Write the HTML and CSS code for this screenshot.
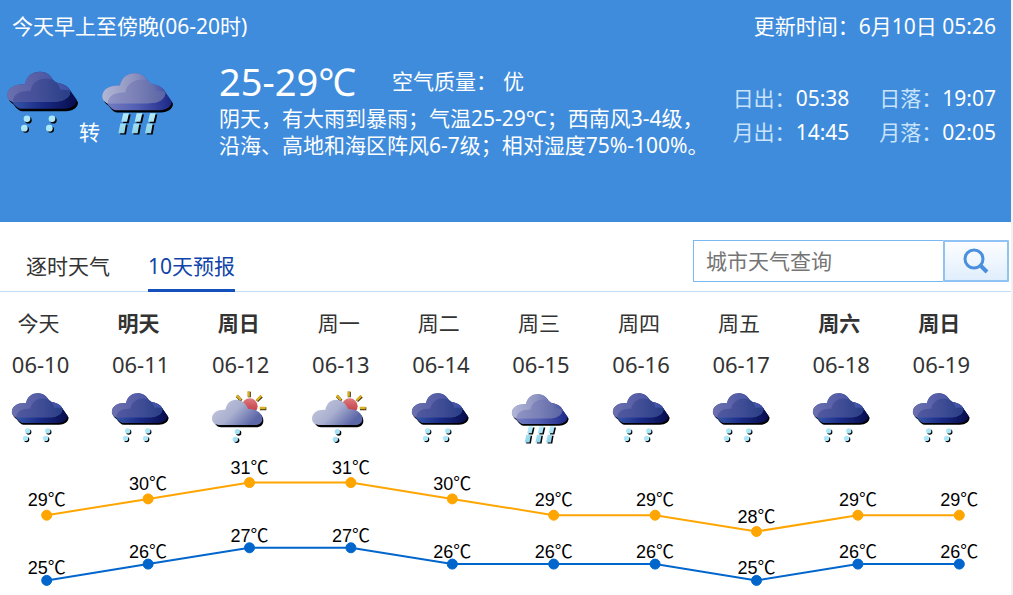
FILE: index.html
```html
<!DOCTYPE html>
<html lang="zh-CN">
<head>
  <meta charset="UTF-8" />
  <meta name="viewport" content="width=device-width, initial-scale=1.0"/>
  <title>天气预报</title>
  <link rel="stylesheet" href="styles.css">
</head>
<body>

<!-- weather icons -->
<svg class="icon-defs" width="0" height="0" aria-hidden="true">
  <defs>
    <linearGradient id="rainBase" x1="0" x2="1"><stop offset="0" stop-color="#3a5cab"/><stop offset=".5" stop-color="#1a2b86"/><stop offset="1" stop-color="#070c4c"/></linearGradient>
    <linearGradient id="rainBack" x1="0" x2="1"><stop offset="0" stop-color="#6c70ae"/><stop offset=".5" stop-color="#555da6"/><stop offset="1" stop-color="#3d51a8"/></linearGradient>
    <linearGradient id="rainFront" x1="0" x2="1"><stop offset="0" stop-color="#5259a0"/><stop offset=".5" stop-color="#414e96"/><stop offset="1" stop-color="#283e86"/></linearGradient>
    <linearGradient id="heavyBase" x1="0" x2="1"><stop offset="0" stop-color="#7880c2"/><stop offset=".5" stop-color="#525eb2"/><stop offset="1" stop-color="#1c2888"/></linearGradient>
    <linearGradient id="heavyBack" x1="0" x2="1"><stop offset="0" stop-color="#b2b6d6"/><stop offset=".5" stop-color="#8e94c0"/><stop offset="1" stop-color="#4854a6"/></linearGradient>
    <linearGradient id="heavyFront" x1="0" x2="1"><stop offset="0" stop-color="#9094c6"/><stop offset=".5" stop-color="#7a80b6"/><stop offset="1" stop-color="#5a64a4"/></linearGradient>
    <linearGradient id="showerCloud" x1="0" y1="0" x2="1" y2=".5"><stop offset="0" stop-color="#c9cce0"/><stop offset=".55" stop-color="#a9afcf"/><stop offset="1" stop-color="#5c67a8"/></linearGradient>
    <linearGradient id="sunFill" x1="0" y1="0" x2="0" y2="1"><stop offset="0" stop-color="#dd7a7c"/><stop offset="1" stop-color="#c0303c"/></linearGradient>
    <linearGradient id="streak" x1="0" y1="0" x2="0" y2="1"><stop offset="0" stop-color="#b6ecfb"/><stop offset="1" stop-color="#8fd3ea"/></linearGradient>

    <path id="cloudBody" d="M22 106C22 85 42 72 75 73C80 48 98 36 120 36C142 36 155 50 163 68C188 70 206 80 211 93L230 120C230 136 214 147 194 147H62Q50 146 36 126Q22 118 22 106Z"/>
    <path id="cloudBack" d="M22 106C22 85 42 72 75 73C80 48 98 36 120 36C142 36 155 50 163 68C188 70 206 80 211 93C212 112 194 126 160 126H36Q22 118 22 106Z"/>
    <path id="cloudFront" d="M38 126C40 104 60 92 91 94C96 68 116 56 138 56C162 56 177 70 181 90Q198 88 211 93C212 112 194 126 160 126Z"/>
    <path id="streakPair" d="M85 156h17l-6 26h-17zM76 187h17l-5 29h-18z"/>

    <symbol id="rain" viewBox="15 25 228 200">
      <use href="#cloudBody" x="4" y="7"/>
      <use href="#cloudBody" fill="url(#rainBase)"/>
      <use href="#cloudBack" fill="url(#rainBack)"/>
      <use href="#cloudFront" fill="url(#rainFront)"/>
      <g><circle cx="85" cy="181" r="10"/><circle cx="77" cy="209" r="10"/><circle cx="160" cy="181" r="10"/><circle cx="152" cy="209" r="10"/></g>
      <g fill="#aee7f8"><circle cx="81" cy="177" r="10"/><circle cx="73" cy="205" r="10"/><circle cx="156" cy="177" r="10"/><circle cx="148" cy="205" r="10"/></g>
    </symbol>

    <symbol id="heavy" viewBox="15 25 228 200">
      <use href="#streakPair" x="5" y="8"/><use href="#streakPair" x="45" y="8"/><use href="#streakPair" x="85" y="8"/>
      <g fill="url(#streak)"><use href="#streakPair" y="4"/><use href="#streakPair" x="40" y="4"/><use href="#streakPair" x="80" y="4"/></g>
      <use href="#cloudBody" x="4" y="11"/>
      <use href="#cloudBody" y="4" fill="url(#heavyBase)"/>
      <use href="#cloudBack" y="4" fill="url(#heavyBack)"/>
      <use href="#cloudFront" y="4" fill="url(#heavyFront)"/>
    </symbol>

    <symbol id="shower" viewBox="32 30 183 160">
      <g fill="none" stroke="#3c3010" stroke-width="9"><path d="M150 34v17M113 47l13 14M173 62l14-14M182 85h19"/></g>
      <g fill="none" stroke="#d8b020" stroke-width="7"><path d="M148 33v16M112 45l13 14M172 60l14-14M181 83h18"/></g>
      <circle cx="151" cy="78" r="24" fill="url(#sunFill)"/>
      <path d="M42 122C51 138 56 141 70 141H170C184 141 192 133 192 122C192 104 178 94 158 94H100L50 110Z"/>
      <path fill="url(#showerCloud)" d="M38 115C38 97 54 87 78 88C82 68 94 58 110 58C128 58 140 70 147 86C172 86 189 98 189 116C189 127 181 134 168 134H58Q38 131 38 115Z"/>
      <g><circle cx="118" cy="158" r="8"/><circle cx="112" cy="180" r="8"/></g>
      <g fill="#a5e2f5"><circle cx="114" cy="154" r="8"/><circle cx="108" cy="177" r="8"/></g>
    </symbol>
  </defs>
</svg>

<div class="page">
  <header class="today">
    <div class="today-top">
      <span>今天早上至傍晚(06-20时)</span>
      <span>更新时间：6月10日 05:26</span>
    </div>
    <div class="today-main">
      <div class="condition">
        <svg class="icon-lg" role="img" aria-label="大雨"><use href="#rain"/></svg>
        <span>转</span>
        <svg class="icon-lg" role="img" aria-label="暴雨"><use href="#heavy"/></svg>
      </div>
      <div class="info">
        <div class="info-head">
          <h1>25-29℃</h1>
          <span>空气质量：</span>
          <span class="aqi">优</span>
        </div>
        <p>阴天，有大雨到暴雨；气温25-29℃；西南风3-4级，<br>沿海、高地和海区阵风6-7级；相对湿度75%-100%。</p>
      </div>
      <div class="astro">
        <div><span>日出：</span>05:38</div>
        <div><span>日落：</span>19:07</div>
        <div><span>月出：</span>14:45</div>
        <div><span>月落：</span>02:05</div>
      </div>
    </div>
  </header>

  <nav class="tabs">
    <a href="#hourly">逐时天气</a>
    <a href="#forecast" class="active">10天预报</a>
    <form class="search">
      <input type="text" placeholder="城市天气查询" aria-label="城市天气查询">
      <button type="button" aria-label="查询">
        <svg width="28" height="28" viewBox="0 0 28 28" fill="none" stroke="#4a90dc" stroke-width="3"><circle cx="12" cy="12" r="9"/><path d="M18 18l7 7" stroke-width="4"/></svg>
      </button>
    </form>
  </nav>

  <table class="forecast" id="forecast">
    <thead>
      <tr>
        <th>今天</th><th class="rest">明天</th><th class="rest">周日</th><th>周一</th><th>周二</th>
        <th>周三</th><th>周四</th><th>周五</th><th class="rest">周六</th><th class="rest">周日</th>
      </tr>
    </thead>
    <tbody>
      <tr class="dates">
        <td>06-10</td><td>06-11</td><td>06-12</td><td>06-13</td><td>06-14</td>
        <td>06-15</td><td>06-16</td><td>06-17</td><td>06-18</td><td>06-19</td>
      </tr>
      <tr class="icons">
        <td><svg class="icon"><use href="#rain"/></svg></td>
        <td><svg class="icon"><use href="#rain"/></svg></td>
        <td><svg class="icon"><use href="#shower"/></svg></td>
        <td><svg class="icon"><use href="#shower"/></svg></td>
        <td><svg class="icon"><use href="#rain"/></svg></td>
        <td><svg class="icon"><use href="#heavy"/></svg></td>
        <td><svg class="icon"><use href="#rain"/></svg></td>
        <td><svg class="icon"><use href="#rain"/></svg></td>
        <td><svg class="icon"><use href="#rain"/></svg></td>
        <td><svg class="icon"><use href="#rain"/></svg></td>
      </tr>
    </tbody>
  </table>

  <svg class="chart" id="chart" viewBox="0 0 1011 151"></svg>
</div>

<script src="script.js"></script>
</body>
</html>
```
FILE: styles.css
```css
* { margin: 0; padding: 0; box-sizing: border-box; }
body {
  font-family: 'Noto Sans', 'Noto Sans CJK SC', sans-serif;
  font-size: 21px; line-height: 30px; color: #333; background: #f2f2f2;
}
a { color: inherit; text-decoration: none; }
.icon-defs { position: absolute; }
.page { margin-right: 2px; min-height: 100vh; background: #fff; }

.today { min-height: 222px; background: #3f8cdc; color: #fff; }
.today-top {
  display: flex; justify-content: space-between;
  padding: 11px 15px 0 12px;
}
.today-main { display: flex; padding: 0 15px 0 5px; white-space: nowrap; }
.condition { display: flex; align-items: flex-start; width: 214px; padding-top: 27px; }
.condition span { margin-left: -2px; padding-top: 49px; }
.icon-lg { width: 76px; height: 67px; }
.info { padding-top: 16px; }
.info-head { display: flex; align-items: center; height: 48px; line-height: 48px; }
.info-head h1 { font-size: 38px; font-weight: 400; margin-right: 36px; }
.info-head .aqi { margin-left: 6px; }
.info p { line-height: 27px; }
.astro {
  display: grid; grid-template-columns: auto auto;
  gap: 0 30px; align-content: start;
  margin-left: auto; padding-top: 40px; line-height: 34px;
}
.astro span { color: #c9e3fb; }

.tabs {
  display: flex; align-items: flex-end; gap: 38px;
  height: 70px; padding: 0 2px 0 26px;
  border-bottom: 1px solid #c4dcf4;
}
.tabs a { height: 43px; line-height: 34px; margin-bottom: -1px; }
.tabs a.active { color: #1144a8; border-bottom: 3px solid #1450bc; }
.search { display: flex; height: 42px; margin: 0 0 9px auto; }
.search input {
  width: 250px; padding: 0 12px; font: inherit; color: #333;
  border: 1px solid #7ab8f0; border-right: none; border-radius: 0; outline: none;
}
.search input::placeholder { color: #757575; }
.search button {
  display: flex; align-items: center; justify-content: center;
  width: 66px; cursor: pointer;
  border: 2px solid #90c3f3; border-radius: 1px;
  background: linear-gradient(#fdfeff, #e0eefc);
}

.forecast {
  width: 99%; margin-top: 16px;
  table-layout: fixed; border-collapse: collapse; text-align: center;
}
.forecast th, .forecast td { padding: 0 19px 0 0; white-space: nowrap; }
.forecast th { padding-right: 23px; font-weight: 400; }
.forecast th.rest { font-weight: 700; }
.dates td { padding-top: 11px; font-size: 22px; }
.icons td { padding-top: 11px; }
.icon { display: block; width: 61px; height: 54px; margin: 0 auto; }

.chart { display: block; width: 100%; }
.chart polyline { fill: none; stroke-width: 2; }
.chart .high { stroke: #ffa500; }
.chart .low { stroke: #0066cc; }
.chart circle.high { fill: #ffa500; }
.chart circle.low { fill: #0066cc; }
.chart circle { stroke: none; }
.chart text {
  font-family: 'Liberation Sans', 'Noto Sans CJK SC', sans-serif;
  font-size: 18px; fill: #000; text-anchor: middle;
}
```
FILE: script.js
```js
const chart = document.getElementById('chart');
const highs = [29, 30, 31, 31, 30, 29, 29, 28, 29, 29];
const lows = [25, 26, 27, 27, 26, 26, 26, 25, 26, 26];

function drawLine(temps, cls, labelGap) {
  const points = temps.map((t, i) => ({
    t: t,
    x: 46.7 + i * 101.4,
    y: 136.4 - (t - 25) * 16.3
  }));
  let html = `<polyline class="${cls}" points="${points.map(p => p.x + ',' + p.y).join(' ')}"/>`;
  points.forEach(p => {
    html += `<circle class="${cls}" cx="${p.x}" cy="${p.y}" r="5"/>`;
    html += `<text x="${p.x}" y="${p.y - labelGap}">${p.t}℃</text>`;
  });
  return html;
}

chart.innerHTML = drawLine(highs, 'high', 9) + drawLine(lows, 'low', 6);
```
